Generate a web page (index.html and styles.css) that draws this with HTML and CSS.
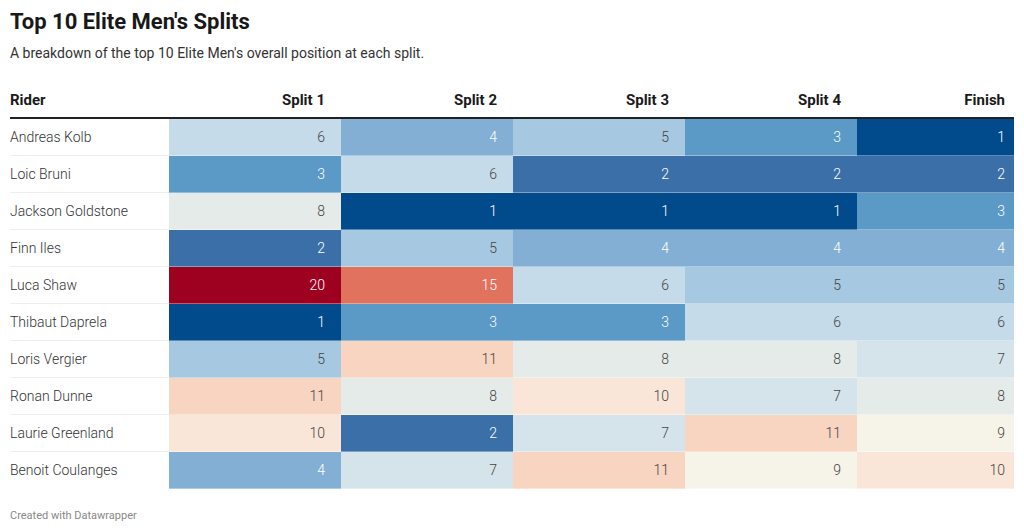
FILE: index.html
```html
<!DOCTYPE html>
<html lang="en">
<head>
<meta charset="utf-8">
<title>Top 10 Elite Men's Splits</title>
<link rel="stylesheet" href="styles.css">
</head>
<body>
<div class="chart">
  <h1 class="title">Top 10 Elite Men's Splits</h1>
  <p class="subtitle">A breakdown of the top 10 Elite Men's overall position at each split.</p>
  <table class="splits">
    <colgroup>
      <col class="c-rider"><col class="c-split"><col class="c-split"><col class="c-split"><col class="c-split"><col class="c-finish">
    </colgroup>
    <thead>
      <tr><th class="rider">Rider</th><th>Split 1</th><th>Split 2</th><th>Split 3</th><th>Split 4</th><th class="last">Finish</th></tr>
    </thead>
    <tbody>
      <tr><td class="rider">Andreas Kolb</td><td class="v6">6</td><td class="v4">4</td><td class="v5">5</td><td class="v3">3</td><td class="v1 last">1</td></tr>
      <tr><td class="rider">Loic Bruni</td><td class="v3">3</td><td class="v6">6</td><td class="v2">2</td><td class="v2">2</td><td class="v2 last">2</td></tr>
      <tr><td class="rider">Jackson Goldstone</td><td class="v8">8</td><td class="v1">1</td><td class="v1">1</td><td class="v1">1</td><td class="v3 last">3</td></tr>
      <tr><td class="rider">Finn Iles</td><td class="v2">2</td><td class="v5">5</td><td class="v4">4</td><td class="v4">4</td><td class="v4 last">4</td></tr>
      <tr><td class="rider">Luca Shaw</td><td class="v20">20</td><td class="v15">15</td><td class="v6">6</td><td class="v5">5</td><td class="v5 last">5</td></tr>
      <tr><td class="rider">Thibaut Daprela</td><td class="v1">1</td><td class="v3">3</td><td class="v3">3</td><td class="v6">6</td><td class="v6 last">6</td></tr>
      <tr><td class="rider">Loris Vergier</td><td class="v5">5</td><td class="v11">11</td><td class="v8">8</td><td class="v8">8</td><td class="v7 last">7</td></tr>
      <tr><td class="rider">Ronan Dunne</td><td class="v11">11</td><td class="v8">8</td><td class="v10">10</td><td class="v7">7</td><td class="v8 last">8</td></tr>
      <tr><td class="rider">Laurie Greenland</td><td class="v10">10</td><td class="v2">2</td><td class="v7">7</td><td class="v11">11</td><td class="v9 last">9</td></tr>
      <tr><td class="rider">Benoit Coulanges</td><td class="v4">4</td><td class="v7">7</td><td class="v11">11</td><td class="v9">9</td><td class="v10 last">10</td></tr>
    </tbody>
  </table>
  <p class="footer">Created with Datawrapper</p>
</div>
</body>
</html>
```

FILE: styles.css
```css
html, body {
  margin: 0;
  padding: 0;
  background: #fff;
}
body {
  font-family: Roboto, "Liberation Sans", sans-serif;
  color: #333;
}
.chart {
  padding: 9px 10px 0 10px;
}
.title {
  margin: 0;
  font-size: 22px;
  line-height: 26px;
  font-weight: 700;
  color: #181818;
}
.subtitle {
  margin: 8px 0 0 0;
  font-size: 14px;
  line-height: 20px;
  font-weight: 400;
  color: #333;
}
.splits {
  margin-top: 19px;
  width: 1004px;
  border-collapse: collapse;
  table-layout: fixed;
  font-size: 14px;
}
.c-rider { width: 159px; }
.c-split { width: 172px; }
.c-finish { width: 157px; }
.splits th {
  font-size: 15px;
  font-weight: 700;
  color: #1a1a1a;
  text-align: right;
  padding: 8px 16px 7px 0;
  line-height: 20px;
  border-bottom: 2px solid #222;
}
.splits th.rider {
  text-align: left;
  padding-left: 0;
}
.splits td {
  height: 36px;
  padding: 0 16px 0 0;
  text-align: right;
  line-height: 20px;
  font-weight: 300;
  color: #444;
  border-bottom: 1px solid rgba(255, 255, 255, 0.35);
}
.splits td.rider {
  text-align: left;
  font-weight: 300;
  color: #333;
  border-bottom: 1px solid #eeeeee;
}
.splits tbody tr:last-child td.rider {
  border-bottom-color: transparent;
}
.splits .last {
  padding-right: 9px;
}
.v1 { background: #014b8c; color: #fff !important; }
.v2 { background: #3a6fa8; color: #fff !important; }
.v3 { background: #5b99c6; color: #fff !important; }
.v4 { background: #82afd3; color: #fff !important; }
.v5 { background: #a7c8e1; }
.v6 { background: #c5dbe9; }
.v7 { background: #d5e4eb; }
.v8 { background: #e5ebe8; }
.v9 { background: #f6f3e9; }
.v10 { background: #fae6d8; }
.v11 { background: #f8d5c1; }
.v15 { background: #e0725e; color: #fff !important; }
.v20 { background: #9e0020; color: #fff !important; }
.footer {
  margin: 20px 0 0 0;
  font-size: 11px;
  line-height: 14px;
  color: #888;
}
```
